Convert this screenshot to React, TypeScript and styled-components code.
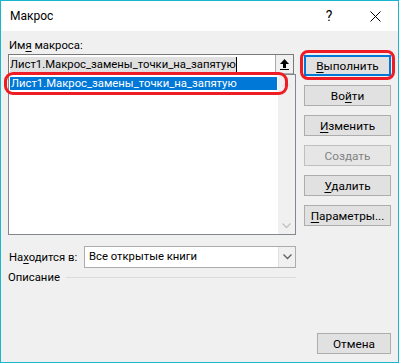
import React from 'react';
import styled, { createGlobalStyle, css } from 'styled-components';

const GlobalStyle = createGlobalStyle`
  html, body { margin: 0; padding: 0; background: #f0f0f0; }
  * { box-sizing: border-box; }
`;

const Window = styled.div`
  width: 399px;
  height: 363px;
  border: 1px solid #18b6cf;
  background: #f0f0f0;
  display: flex;
  flex-direction: column;
  font-family: Roboto, "Noto Sans", sans-serif;
  font-size: 11.3px;
  color: #000;
  position: relative;
  overflow: hidden;
`;

const TitleBar = styled.div`
  height: 30px;
  background: #fff;
  display: flex;
  align-items: center;
  padding-left: 9px;
`;

const Title = styled.div`
  flex: 1;
  font-size: 12px;
`;

const TitleButton = styled.div`
  width: 46px;
  height: 30px;
  display: flex;
  align-items: center;
  justify-content: center;
  font-size: 14px;
`;

const Body = styled.div`
  flex: 1;
  display: grid;
  grid-template-columns: 288px 87px;
  column-gap: 8px;
  padding: 7px 0 8px 7px;
`;

const LeftCol = styled.div`
  display: flex;
  flex-direction: column;
`;

const RightCol = styled.div`
  display: flex;
  flex-direction: column;
  padding-top: 17px;
`;

const Label = styled.div`
  height: 16px;
  line-height: 16px;
  padding-left: 1px;
  white-space: nowrap;
`;

const U = styled.span`
  text-decoration: underline;
  text-underline-offset: 2px;
`;

const NameInput = styled.div`
  height: 20px;
  width: 286px;
  border: 1px solid #7a7a7a;
  border-bottom: none;
  background: #fff;
  display: flex;
  align-items: center;
`;

const InputText = styled.div`
  flex: 1;
  padding-left: 1px;
  display: flex;
  align-items: center;
`;

const SelText = styled.span`
  background: #e0e0e0;
  line-height: 15px;
  white-space: nowrap;
`;

const Caret = styled.span`
  width: 1px;
  height: 15px;
  background: #000;
`;

const UpButton = styled.div`
  width: 18px;
  height: 19px;
  border-left: 1px solid #ababab;
  border-bottom: 1px solid #ababab;
  background: #f0f0f0;
  display: flex;
  align-items: center;
  justify-content: center;
`;

const ListBox = styled.div`
  height: 161px;
  width: 288px;
  border: 1px solid #828790;
  background: #fff;
  display: flex;
  position: relative;
`;

const ListItems = styled.div`
  flex: 1;
  padding: 2px 1px;
`;

const ListItem = styled.div<{ $selected?: boolean }>`
  height: 13px;
  line-height: 13px;
  padding-left: 1px;
  white-space: nowrap;
  ${({ $selected }) => $selected && css`
    background: #0078d7;
    color: #fff;
  `}
`;

const ScrollBar = styled.div`
  width: 17px;
  background: #f0f0f0;
  display: flex;
  flex-direction: column;
  justify-content: space-between;
  align-items: center;
  padding: 6px 0 5px;
`;

const Annotation = styled.div<{ $radius: number }>`
  position: absolute;
  border: 3px solid #ee1c25;
  border-radius: ${({ $radius }) => $radius}px;
  pointer-events: none;
`;

const Row = styled.div`
  display: flex;
  align-items: center;
  margin-top: 11px;
`;

const RowLabel = styled.div`
  width: 76px;
  padding-left: 1px;
  white-space: nowrap;
`;

const Select = styled.div`
  width: 212px;
  height: 22px;
  border: 1px solid #acacac;
  background: #fff;
  display: flex;
`;

const SelectValue = styled.div`
  flex: 1;
  padding-left: 4px;
  line-height: 20px;
`;

const SelectArrow = styled.div`
  width: 17px;
  border-left: 1px solid #e0e0e0;
  background: #f0f0f0;
  display: flex;
  align-items: center;
  justify-content: center;
`;

const Group = styled.div`
  display: flex;
  align-items: center;
  margin-top: 1px;
  height: 16px;
`;

const GroupLine = styled.div`
  flex: 1;
  height: 1px;
  background: #dcdcdc;
  margin-left: 6px;
`;

const Button = styled.div<{ $default?: boolean; $disabled?: boolean }>`
  height: 21px;
  width: 87px;
  border: 1px solid ${({ $disabled }) => ($disabled ? '#bfbfbf' : '#adadad')};
  background: ${({ $disabled }) => ($disabled ? '#e6e6e6' : '#e1e1e1')};
  color: ${({ $disabled }) => ($disabled ? '#838383' : '#000')};
  font-size: 11.8px;
  display: flex;
  align-items: center;
  justify-content: center;
  margin-bottom: 9px;
  ${({ $default }) => $default && css`
    border: 2px solid #0078d7;
  `}
`;

const CancelWrap = styled.div`
  margin-top: auto;
  display: flex;
  justify-content: flex-end;
`;

const CancelButton = styled(Button)`
  width: 74px;
  margin-bottom: 0;
`;

const DefaultWrap = styled.div`
  position: relative;
`;

function CloseIcon() {
  return (
    <svg width="11" height="11" viewBox="0 0 11 11">
      <path d="M0.5 0.5 L10.5 10.5 M10.5 0.5 L0.5 10.5" stroke="#000" strokeWidth="1" />
    </svg>
  );
}

function UpArrowIcon() {
  return (
    <svg width="9" height="11" viewBox="0 0 9 11">
      <polygon points="4.5,0 9,5 0,5" fill="#000" />
      <rect x="3" y="5" width="3" height="4" fill="#000" />
      <rect x="0" y="10" width="9" height="1" fill="#000" />
    </svg>
  );
}

function Chevron({ color, up }: { color: string; up?: boolean }) {
  return (
    <svg width="9" height="6" viewBox="0 0 9 6">
      <path
        d={up ? 'M0.5 5.5 L4.5 1.5 L8.5 5.5' : 'M0.5 0.5 L4.5 4.5 L8.5 0.5'}
        stroke={color}
        strokeWidth="1.3"
        fill="none"
      />
    </svg>
  );
}

const macroName = 'Лист1.Макрос_замены_точки_на_запятую';

export default function App() {
  return (
    <>
      <GlobalStyle />
      <Window>
        <TitleBar>
          <Title>Макрос</Title>
          <TitleButton>?</TitleButton>
          <TitleButton>
            <CloseIcon />
          </TitleButton>
        </TitleBar>
        <Body>
          <LeftCol>
            <Label>
              Им<U>я</U> макроса:
            </Label>
            <NameInput>
              <InputText>
                <SelText>{macroName}</SelText>
                <Caret />
              </InputText>
              <UpButton>
                <UpArrowIcon />
              </UpButton>
            </NameInput>
            <ListBox>
              <ListItems>
                <ListItem $selected>{macroName}</ListItem>
              </ListItems>
              <ScrollBar>
                <Chevron color="#e0e0e0" up />
                <Chevron color="#c2c2c2" />
              </ScrollBar>
              <Annotation $radius={9} style={{ left: -5, top: -3, width: 284, height: 23 }} />
            </ListBox>
            <Row>
              <RowLabel>
                На<U>х</U>одится в:
              </RowLabel>
              <Select>
                <SelectValue>Все открытые книги</SelectValue>
                <SelectArrow>
                  <Chevron color="#606060" />
                </SelectArrow>
              </Select>
            </Row>
            <Group>
              Описание
              <GroupLine />
            </Group>
          </LeftCol>
          <RightCol>
            <DefaultWrap>
              <Button $default>
                <span>
                  <U>В</U>ыполнить
                </span>
              </Button>
              <Annotation $radius={8} style={{ left: -4, top: -5, width: 95, height: 30 }} />
            </DefaultWrap>
            <Button>
              <span>
                Во<U>й</U>ти
              </span>
            </Button>
            <Button>
              <span>
                <U>И</U>зменить
              </span>
            </Button>
            <Button $disabled>Создать</Button>
            <Button>
              <span>
                <U>У</U>далить
              </span>
            </Button>
            <Button>
              <span>
                <U>П</U>араметры...
              </span>
            </Button>
            <CancelWrap>
              <CancelButton>Отмена</CancelButton>
            </CancelWrap>
          </RightCol>
        </Body>
      </Window>
    </>
  );
}
